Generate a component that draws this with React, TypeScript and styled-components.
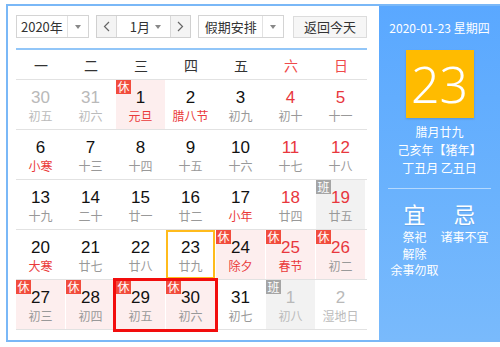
import styled, { createGlobalStyle, css } from 'styled-components';

const GlobalStyle = createGlobalStyle`
  html, body {
    margin: 0;
    padding: 0;
    background: #fff;
    overflow: hidden;
  }
  body {
    font-family: "Noto Sans CJK SC", "Liberation Sans", sans-serif;
    color: #333;
  }
`;

const CJK = `"Noto Sans CJK SC", "Liberation Sans", sans-serif`;
const NUM = `"Liberation Sans", Arial, sans-serif`;

const Frame = styled.div`
  box-sizing: border-box;
  margin: 4px 0 0 6px;
  width: 494px;
  height: 338px;
  border: 2px solid #7ab8f7;
  border-right: none;
  display: flex;
`;

const LeftPanel = styled.div`
  width: 371px;
  box-sizing: border-box;
  padding: 9px 12px 0 8px;
  background: #fff;
  display: flex;
  flex-direction: column;
`;

const Toolbar = styled.div`
  display: flex;
  align-items: center;
  height: 23px;
  padding-bottom: 10px;
  border-bottom: 2px solid #92c6f8;
`;

const Select = styled.div<{ $w: number; $ml?: number }>`
  box-sizing: border-box;
  width: ${(p) => p.$w}px;
  margin-left: ${(p) => p.$ml ?? 0}px;
  height: 23px;
  border: 1px solid #d4d4d4;
  display: flex;
  align-items: stretch;
  background: #fff;
  font-size: 13px;
  font-family: ${CJK};
  color: #333;
`;

const SelectText = styled.div`
  flex: 1;
  display: flex;
  align-items: center;
  justify-content: center;
  line-height: 21px;
`;

const Caret = styled.div`
  width: 20px;
  border-left: 1px solid #e2e2e2;
  display: flex;
  align-items: center;
  justify-content: center;
  &::after {
    content: '';
    border-left: 3.5px solid transparent;
    border-right: 3.5px solid transparent;
    border-top: 4px solid #888;
  }
`;

const MonthGroup = styled.div`
  box-sizing: border-box;
  margin-left: 7px;
  width: 96px;
  height: 23px;
  border: 1px solid #d0d0d0;
  display: flex;
  font-size: 13px;
  font-family: ${CJK};
`;

const ArrowBtn = styled.div<{ $side: 'l' | 'r' }>`
  width: 19px;
  background: #f4f4f4;
  display: flex;
  align-items: center;
  justify-content: center;
  ${(p) =>
    p.$side === 'l'
      ? css`border-right: 1px solid #d8d8d8;`
      : css`border-left: 1px solid #d8d8d8;`}
`;

const MonthText = styled.div`
  flex: 1;
  display: flex;
  align-items: center;
  padding-left: 13px;
  position: relative;
  color: #333;
  &::after {
    content: '';
    position: absolute;
    right: 9px;
    top: 9px;
    border-left: 3.5px solid transparent;
    border-right: 3.5px solid transparent;
    border-top: 4px solid #888;
  }
`;

const TodayButton = styled.div`
  box-sizing: border-box;
  margin-left: 9px;
  width: 74px;
  height: 22px;
  border: 1px solid #dcdcdc;
  background: #f6f6f6;
  display: flex;
  align-items: center;
  justify-content: center;
  font-size: 13px;
  font-family: ${CJK};
  color: #333;
`;

const WeekHeader = styled.div`
  display: grid;
  grid-template-columns: repeat(7, 50px);
  height: 29px;
  border-bottom: 1px solid #e2e2e2;
`;

const WeekDay = styled.div<{ $red?: boolean }>`
  display: flex;
  align-items: center;
  justify-content: center;
  font-size: 14px;
  font-family: ${CJK};
  color: ${(p) => (p.$red ? '#ef4a4a' : '#333')};
`;

const Grid = styled.div`
  position: relative;
`;

const Row = styled.div`
  display: grid;
  grid-template-columns: repeat(7, 50px);
  height: 50px;
  box-sizing: border-box;
  border-bottom: 1px solid #e2e2e2;
  &:last-child {
    border-bottom: none;
  }
`;

type Bg = 'pink' | 'gray' | undefined;

const Cell = styled.div<{ $bg: Bg; $today?: boolean }>`
  position: relative;
  box-sizing: border-box;
  margin-right: 1px;
  height: 49px;
  padding-top: 8px;
  display: flex;
  flex-direction: column;
  align-items: center;
  background: ${(p) =>
    p.$bg === 'pink' ? '#fdeeee' : p.$bg === 'gray' ? '#f2f2f2' : '#fff'};
  ${(p) =>
    p.$today &&
    css`
      border: 2px solid #ffbb1c;
      padding-top: 6px;
    `}
`;

const Num = styled.div<{ $color: string }>`
  font-family: ${NUM};
  font-size: 17px;
  line-height: 20px;
  color: ${(p) => p.$color};
`;

const Lunar = styled.div<{ $color: string }>`
  font-family: ${CJK};
  font-size: 12px;
  line-height: 16px;
  color: ${(p) => p.$color};
`;

const Badge = styled.div<{ $kind: '休' | '班' }>`
  position: absolute;
  left: 0;
  top: 0;
  width: 15px;
  height: 14px;
  display: flex;
  align-items: center;
  justify-content: center;
  font-family: ${CJK};
  font-size: 12px;
  line-height: 14px;
  color: #fff;
  background: ${(p) => (p.$kind === '休' ? '#f24c3d' : '#a5a5a5')};
`;

const Selection = styled.div`
  position: absolute;
  left: 97px;
  top: 198px;
  width: 105px;
  height: 54px;
  box-sizing: border-box;
  border: 3px solid #f20d0d;
  pointer-events: none;
`;

const RightPanel = styled.div`
  flex: 1;
  background: linear-gradient(180deg, #5aa8ff 0%, #6ab2fd 55%, #79bafc 100%);
  color: #fff;
  display: flex;
  flex-direction: column;
  align-items: center;
  padding-top: 13px;
  font-family: ${CJK};
`;

const DateLine = styled.div`
  font-size: 12px;
  line-height: 18px;
  white-space: nowrap;
`;

const DayBox = styled.div`
  margin-top: 13px;
  width: 68px;
  height: 68px;
  background: #ffbb00;
  box-shadow: 0 1px 2px rgba(0, 0, 0, 0.15);
  display: flex;
  align-items: center;
  justify-content: center;
  font-family: "Noto Sans", "Liberation Sans", sans-serif;
  font-size: 50px;
  font-weight: 300;
  line-height: 1;
  color: #fff;
`;

const LunarInfo = styled.div`
  margin-top: 5px;
  font-size: 12px;
  line-height: 18px;
  text-align: center;
  white-space: nowrap;
`;

const Divider = styled.div`
  align-self: stretch;
  margin: 11px 9px 0;
  height: 1px;
  background: rgba(255, 255, 255, 0.5);
`;

const Advice = styled.div`
  margin-top: 10px;
  display: grid;
  grid-template-columns: 50px 50px;
`;

const AdviceCol = styled.div`
  display: flex;
  flex-direction: column;
  align-items: center;
`;

const AdviceTitle = styled.div`
  font-size: 22px;
  line-height: 28px;
  margin-bottom: 2px;
  text-shadow: 0 1px 1px rgba(0, 0, 0, 0.1);
`;

const AdviceItem = styled.div`
  font-size: 12px;
  line-height: 16.5px;
  white-space: nowrap;
`;

type Day = {
  d: number;
  l: string;
  other?: boolean;
  wk?: boolean;
  festival?: boolean;
  badge?: '休' | '班';
  bg?: Bg;
  today?: boolean;
};

const rows: Day[][] = [
  [
    { d: 30, l: '初五', other: true },
    { d: 31, l: '初六', other: true },
    { d: 1, l: '元旦', festival: true, badge: '休', bg: 'pink' },
    { d: 2, l: '腊八节', festival: true },
    { d: 3, l: '初九' },
    { d: 4, l: '初十', wk: true },
    { d: 5, l: '十一', wk: true },
  ],
  [
    { d: 6, l: '小寒', festival: true },
    { d: 7, l: '十三' },
    { d: 8, l: '十四' },
    { d: 9, l: '十五' },
    { d: 10, l: '十六' },
    { d: 11, l: '十七', wk: true },
    { d: 12, l: '十八', wk: true },
  ],
  [
    { d: 13, l: '十九' },
    { d: 14, l: '二十' },
    { d: 15, l: '廿一' },
    { d: 16, l: '廿二' },
    { d: 17, l: '小年', festival: true },
    { d: 18, l: '廿四', wk: true },
    { d: 19, l: '廿五', wk: true, badge: '班', bg: 'gray' },
  ],
  [
    { d: 20, l: '大寒', festival: true },
    { d: 21, l: '廿七' },
    { d: 22, l: '廿八' },
    { d: 23, l: '廿九', today: true },
    { d: 24, l: '除夕', festival: true, badge: '休', bg: 'pink' },
    { d: 25, l: '春节', wk: true, festival: true, badge: '休', bg: 'pink' },
    { d: 26, l: '初二', wk: true, badge: '休', bg: 'pink' },
  ],
  [
    { d: 27, l: '初三', badge: '休', bg: 'pink' },
    { d: 28, l: '初四', badge: '休', bg: 'pink' },
    { d: 29, l: '初五', badge: '休', bg: 'pink' },
    { d: 30, l: '初六', badge: '休', bg: 'pink' },
    { d: 31, l: '初七' },
    { d: 1, l: '初八', other: true, badge: '班', bg: 'gray' },
    { d: 2, l: '湿地日', other: true },
  ],
];

const weekdays = ['一', '二', '三', '四', '五', '六', '日'];

const numColor = (c: Day) => (c.other ? '#b9b9b9' : c.wk ? '#e8373d' : '#111');
const lunarColor = (c: Day) =>
  c.other ? '#bbbbbb' : c.festival ? '#ea3a3a' : '#999';

export default function App() {
  return (
    <>
      <GlobalStyle />
      <Frame>
        <LeftPanel>
          <Toolbar>
            <Select $w={73}>
              <SelectText>2020年</SelectText>
              <Caret />
            </Select>
            <MonthGroup>
              <ArrowBtn $side="l">
                <svg width="7" height="11" viewBox="0 0 7 11">
                  <path d="M6 1 L1.5 5.5 L6 10" fill="none" stroke="#666" strokeWidth="1.2" />
                </svg>
              </ArrowBtn>
              <MonthText>1月</MonthText>
              <ArrowBtn $side="r">
                <svg width="7" height="11" viewBox="0 0 7 11">
                  <path d="M1 1 L5.5 5.5 L1 10" fill="none" stroke="#666" strokeWidth="1.2" />
                </svg>
              </ArrowBtn>
            </MonthGroup>
            <Select $w={86} $ml={7}>
              <SelectText>假期安排</SelectText>
              <Caret />
            </Select>
            <TodayButton>返回今天</TodayButton>
          </Toolbar>
          <WeekHeader>
            {weekdays.map((w, i) => (
              <WeekDay key={w} $red={i >= 5}>
                {w}
              </WeekDay>
            ))}
          </WeekHeader>
          <Grid>
            {rows.map((r, ri) => (
              <Row key={ri}>
                {r.map((c, ci) => (
                  <Cell key={ci} $bg={c.bg} $today={c.today}>
                    {c.badge && <Badge $kind={c.badge}>{c.badge}</Badge>}
                    <Num $color={numColor(c)}>{c.d}</Num>
                    <Lunar $color={lunarColor(c)}>{c.l}</Lunar>
                  </Cell>
                ))}
              </Row>
            ))}
            <Selection />
          </Grid>
        </LeftPanel>
        <RightPanel>
          <DateLine>2020-01-23 星期四</DateLine>
          <DayBox>23</DayBox>
          <LunarInfo>
            腊月廿九
            <br />
            己亥年【猪年】
            <br />
            丁丑月 乙丑日
          </LunarInfo>
          <Divider />
          <Advice>
            <AdviceCol>
              <AdviceTitle>宜</AdviceTitle>
              <AdviceItem>祭祀</AdviceItem>
              <AdviceItem>解除</AdviceItem>
              <AdviceItem>余事勿取</AdviceItem>
            </AdviceCol>
            <AdviceCol>
              <AdviceTitle>忌</AdviceTitle>
              <AdviceItem>诸事不宜</AdviceItem>
            </AdviceCol>
          </Advice>
        </RightPanel>
      </Frame>
    </>
  );
}
